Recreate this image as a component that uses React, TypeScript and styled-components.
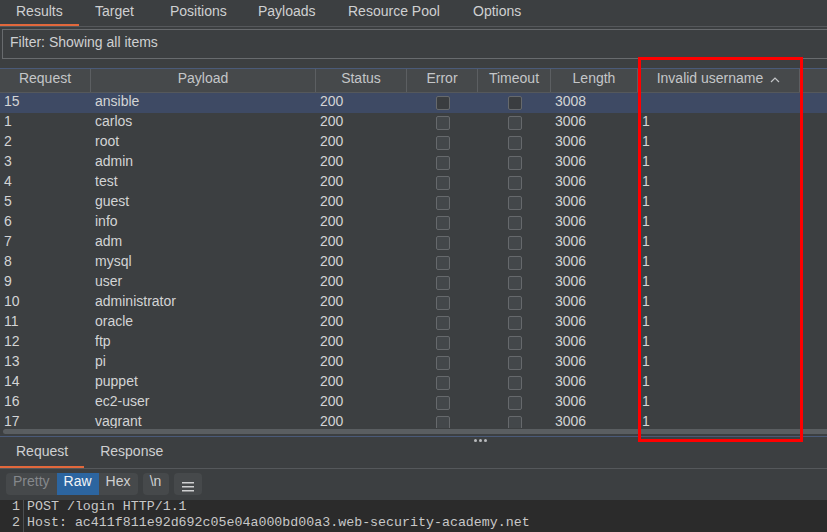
import styled, { createGlobalStyle } from 'styled-components';

interface Row {
  id: number;
  payload: string;
  length: number;
  invalid: string;
}

const rows: Row[] = [
  { id: 15, payload: 'ansible', length: 3008, invalid: '' },
  { id: 1, payload: 'carlos', length: 3006, invalid: '1' },
  { id: 2, payload: 'root', length: 3006, invalid: '1' },
  { id: 3, payload: 'admin', length: 3006, invalid: '1' },
  { id: 4, payload: 'test', length: 3006, invalid: '1' },
  { id: 5, payload: 'guest', length: 3006, invalid: '1' },
  { id: 6, payload: 'info', length: 3006, invalid: '1' },
  { id: 7, payload: 'adm', length: 3006, invalid: '1' },
  { id: 8, payload: 'mysql', length: 3006, invalid: '1' },
  { id: 9, payload: 'user', length: 3006, invalid: '1' },
  { id: 10, payload: 'administrator', length: 3006, invalid: '1' },
  { id: 11, payload: 'oracle', length: 3006, invalid: '1' },
  { id: 12, payload: 'ftp', length: 3006, invalid: '1' },
  { id: 13, payload: 'pi', length: 3006, invalid: '1' },
  { id: 14, payload: 'puppet', length: 3006, invalid: '1' },
  { id: 16, payload: 'ec2-user', length: 3006, invalid: '1' },
  { id: 17, payload: 'vagrant', length: 3006, invalid: '1' },
];

const widths = [91, 225, 91, 71, 73, 87, 162, 27];
const headers = ['Request', 'Payload', 'Status', 'Error', 'Timeout', 'Length', 'Invalid username', ''];

const tabs = [
  { label: 'Results', w: 79 },
  { label: 'Target', w: 75 },
  { label: 'Positions', w: 88 },
  { label: 'Payloads', w: 90 },
  { label: 'Resource Pool', w: 125 },
  { label: 'Options', w: 80 },
];

const GlobalStyle = createGlobalStyle`
  html, body {
    margin: 0;
    padding: 0;
    background: #3c3f41;
  }
  body {
    font-family: "Liberation Sans", Arial, sans-serif;
    font-size: 14px;
    color: #d2d3d4;
  }
`;

const Root = styled.div`
  position: relative;
  width: 827px;
  height: 532px;
  overflow: hidden;
  display: flex;
  flex-direction: column;
  background: #3c3f41;
`;

const TabBar = styled.div`
  display: flex;
  height: 26px;
  border-bottom: 1px solid #55585b;
  flex-shrink: 0;
`;

const Tab = styled.div<{ $active?: boolean; $w?: number }>`
  ${(p) => (p.$w ? `width: ${p.$w}px;` : '')}
  box-sizing: border-box;
  padding: 0 16px;
  line-height: 22px;
  white-space: nowrap;
  color: #cfd0d1;
  border-bottom: 2px solid ${(p) => (p.$active ? '#e2683c' : 'transparent')};
`;

const Filter = styled.div`
  margin: 2px 0 0 2px;
  height: 28px;
  border: 1px solid #686b6e;
  border-right: none;
  padding-left: 7px;
  line-height: 25px;
  color: #cfd0d1;
  flex-shrink: 0;
`;

const Table = styled.div`
  margin-top: 9px;
  border-top: 1px solid #4a5a78;
  flex-shrink: 0;
`;

const HeaderRow = styled.div`
  display: flex;
  height: 23px;
  background: #46494b;
  border-bottom: 1px solid #55585b;
`;

const HeadCell = styled.div<{ $w: number }>`
  width: ${(p) => p.$w}px;
  flex-shrink: 0;
  box-sizing: border-box;
  border-right: 1px solid #5c5f62;
  line-height: 18px;
  color: #c4c6c8;
  display: flex;
  justify-content: center;
  align-items: flex-start;
  gap: 7px;
  &:last-child {
    border-right: none;
  }
  svg {
    margin-top: 7px;
  }
`;

const Body = styled.div`
  height: 335px;
  overflow: hidden;
`;

const DataRow = styled.div<{ $selected?: boolean }>`
  display: flex;
  height: 20px;
  background: ${(p) => (p.$selected ? '#3e4a64' : '#3c3f41')};
`;

const Cell = styled.div<{ $w: number }>`
  width: ${(p) => p.$w}px;
  flex-shrink: 0;
  box-sizing: border-box;
  padding-left: 4px;
  line-height: 16px;
  color: #d3d4d5;
`;

const CheckCell = styled.div<{ $w: number }>`
  width: ${(p) => p.$w}px;
  flex-shrink: 0;
  display: flex;
  justify-content: center;
  padding-top: 3px;
`;

const Check = styled.span<{ $selected?: boolean }>`
  width: 12px;
  height: 12px;
  border: 1px solid #66696c;
  border-radius: 2px;
  background: ${(p) => (p.$selected ? '#3a3d40' : '#43474a')};
`;

const ScrollTrack = styled.div`
  height: 8px;
  padding-left: 3px;
  flex-shrink: 0;
`;

const ScrollThumb = styled.div`
  height: 5px;
  margin-top: 1px;
  background: #5a5e61;
  border-radius: 3px 0 0 3px;
`;

const Divider = styled.div`
  height: 3px;
  border-top: 1px solid #4a5a78;
  flex-shrink: 0;
`;

const Dots = styled.div`
  display: flex;
  gap: 2px;
  padding: 2px 0 0 474px;
`;

const Dot = styled.span`
  width: 3px;
  height: 3px;
  border-radius: 50%;
  background: #b9bbbd;
`;

const SubTabBar = styled(TabBar)`
  height: 28px;
`;

const SubTab = styled(Tab)`
  line-height: 22px;
`;

const Toolbar = styled.div`
  display: flex;
  gap: 5px;
  padding: 4px 0 0 6px;
  height: 22px;
  flex-shrink: 0;
`;

const Group = styled.div`
  display: flex;
  background: #46494b;
  border-radius: 4px;
  overflow: hidden;
`;

const ViewButton = styled.div<{ $active?: boolean; $dim?: boolean }>`
  padding: 0 7px;
  line-height: 17px;
  height: 22px;
  background: ${(p) => (p.$active ? '#2c65a0' : 'transparent')};
  color: ${(p) => (p.$active ? '#f2f4f6' : p.$dim ? '#85888b' : '#cfd0d1')};
`;

const IconButton = styled.div<{ $w: number }>`
  width: ${(p) => p.$w}px;
  height: 22px;
  background: #46494b;
  border-radius: 4px;
  display: flex;
  justify-content: center;
  line-height: 17px;
  color: #cfd0d1;
`;

const MenuIcon = styled.div`
  padding-top: 6px;
`;

const Editor = styled.div`
  margin-top: 5px;
  flex: 1;
  background: #2b2b2b;
  font-family: "Liberation Mono", "Courier New", monospace;
  font-size: 13.3px;
  color: #c8c8c8;
`;

const Line = styled.div`
  display: flex;
  height: 16px;
  line-height: 13px;
`;

const LineNo = styled.div`
  width: 24px;
  box-sizing: border-box;
  text-align: right;
  padding-right: 3px;
  border-right: 1px solid #4c4f52;
  color: #c8c8c8;
`;

const Code = styled.div`
  padding-left: 3px;
  white-space: pre;
`;

const Highlight = styled.div`
  position: absolute;
  left: 638px;
  top: 57px;
  width: 165px;
  height: 385px;
  box-sizing: border-box;
  border: 3px solid #ff0000;
  pointer-events: none;
`;

export default function App() {
  return (
    <>
      <GlobalStyle />
      <Root>
        <TabBar>
          {tabs.map((t, i) => (
            <Tab key={t.label} $w={t.w} $active={i === 0}>
              {t.label}
            </Tab>
          ))}
        </TabBar>
        <Filter>Filter: Showing all items</Filter>
        <Table>
          <HeaderRow>
            {headers.map((h, i) => (
              <HeadCell key={i} $w={widths[i]}>
                {h}
                {h === 'Invalid username' && (
                  <svg width="10" height="7" viewBox="0 0 10 7">
                    <polyline points="1,6 5,2 9,6" fill="none" stroke="#c4c6c8" strokeWidth="1.2" />
                  </svg>
                )}
              </HeadCell>
            ))}
          </HeaderRow>
          <Body>
            {rows.map((r, i) => (
              <DataRow key={r.id} $selected={i === 0}>
                <Cell $w={widths[0]}>{r.id}</Cell>
                <Cell $w={widths[1]}>{r.payload}</Cell>
                <Cell $w={widths[2]}>200</Cell>
                <CheckCell $w={widths[3]}>
                  <Check $selected={i === 0} />
                </CheckCell>
                <CheckCell $w={widths[4]}>
                  <Check $selected={i === 0} />
                </CheckCell>
                <Cell $w={widths[5]}>{r.length}</Cell>
                <Cell $w={widths[6]}>{r.invalid}</Cell>
                <Cell $w={widths[7]} />
              </DataRow>
            ))}
          </Body>
        </Table>
        <ScrollTrack>
          <ScrollThumb />
        </ScrollTrack>
        <Divider>
          <Dots>
            <Dot />
            <Dot />
            <Dot />
          </Dots>
        </Divider>
        <SubTabBar>
          <SubTab $active>Request</SubTab>
          <SubTab>Response</SubTab>
        </SubTabBar>
        <Toolbar>
          <Group>
            <ViewButton $dim>Pretty</ViewButton>
            <ViewButton $active>Raw</ViewButton>
            <ViewButton>Hex</ViewButton>
          </Group>
          <IconButton $w={26}>\n</IconButton>
          <IconButton $w={28}>
            <MenuIcon>
              <svg width="12" height="10" viewBox="0 0 12 10">
                <rect x="0" y="0" width="12" height="1.5" fill="#cfd0d1" />
                <rect x="0" y="4" width="12" height="1.5" fill="#cfd0d1" />
                <rect x="0" y="8" width="12" height="1.5" fill="#cfd0d1" />
              </svg>
            </MenuIcon>
          </IconButton>
        </Toolbar>
        <Editor>
          <Line>
            <LineNo>1</LineNo>
            <Code>POST /login HTTP/1.1</Code>
          </Line>
          <Line>
            <LineNo>2</LineNo>
            <Code>Host: ac411f811e92d692c05e04a000bd00a3.web-security-academy.net</Code>
          </Line>
        </Editor>
        <Highlight />
      </Root>
    </>
  );
}
